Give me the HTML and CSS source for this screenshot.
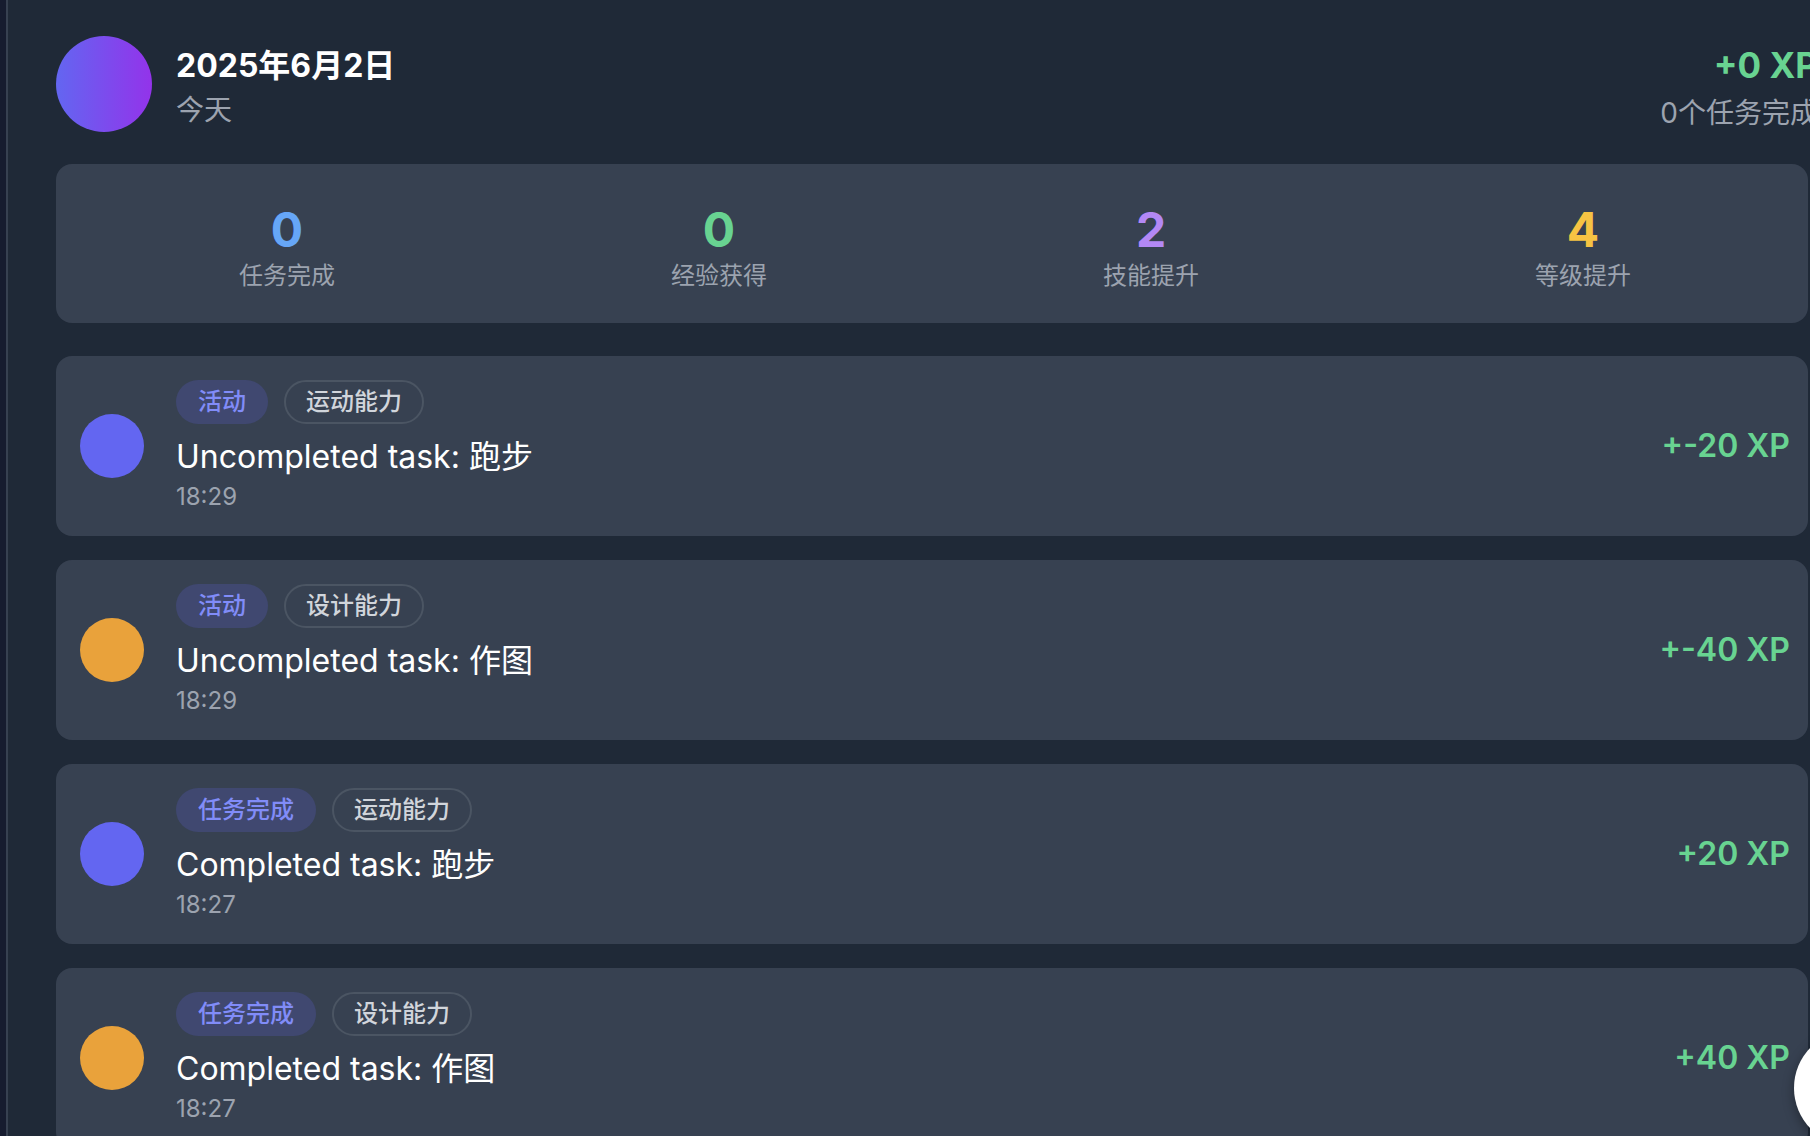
FILE: index.html
```html
<!DOCTYPE html>
<html lang="zh-CN">
<head>
<meta charset="utf-8">
<title>2025年6月2日</title>
<link rel="stylesheet" href="styles.css">
</head>
<body>
<div class="app">
  <div class="rail"></div>
  <main class="main">
    <header class="day-header">
      <div class="day-avatar"></div>
      <div class="day-info">
        <div class="day-title">2025年6月2日</div>
        <div class="day-sub">今天</div>
      </div>
      <div class="day-summary">
        <div class="day-xp">+0 XP</div>
        <div class="day-count">0个任务完成</div>
      </div>
    </header>

    <section class="stats">
      <div class="stat">
        <div class="stat-num blue">0</div>
        <div class="stat-label">任务完成</div>
      </div>
      <div class="stat">
        <div class="stat-num green">0</div>
        <div class="stat-label">经验获得</div>
      </div>
      <div class="stat">
        <div class="stat-num purple">2</div>
        <div class="stat-label">技能提升</div>
      </div>
      <div class="stat">
        <div class="stat-num yellow">4</div>
        <div class="stat-label">等级提升</div>
      </div>
    </section>

    <section class="feed">
      <article class="entry">
        <div class="entry-dot indigo"></div>
        <div class="entry-body">
          <div class="tags">
            <span class="tag tag-type">活动</span>
            <span class="tag tag-skill">运动能力</span>
          </div>
          <div class="entry-title">Uncompleted task: 跑步</div>
          <div class="entry-time">18:29</div>
        </div>
        <div class="entry-xp">+-20 XP</div>
      </article>

      <article class="entry">
        <div class="entry-dot orange"></div>
        <div class="entry-body">
          <div class="tags">
            <span class="tag tag-type">活动</span>
            <span class="tag tag-skill">设计能力</span>
          </div>
          <div class="entry-title">Uncompleted task: 作图</div>
          <div class="entry-time">18:29</div>
        </div>
        <div class="entry-xp">+-40 XP</div>
      </article>

      <article class="entry">
        <div class="entry-dot indigo"></div>
        <div class="entry-body">
          <div class="tags">
            <span class="tag tag-type">任务完成</span>
            <span class="tag tag-skill">运动能力</span>
          </div>
          <div class="entry-title">Completed task: 跑步</div>
          <div class="entry-time">18:27</div>
        </div>
        <div class="entry-xp">+20 XP</div>
      </article>

      <article class="entry">
        <div class="entry-dot orange"></div>
        <div class="entry-body">
          <div class="tags">
            <span class="tag tag-type">任务完成</span>
            <span class="tag tag-skill">设计能力</span>
          </div>
          <div class="entry-title">Completed task: 作图</div>
          <div class="entry-time">18:27</div>
        </div>
        <div class="entry-xp">+40 XP</div>
      </article>
    </section>
  </main>
</div>
<div class="fab"></div>
</body>
</html>
```

FILE: styles.css
```css
html, body {
  margin: 0;
  padding: 0;
  height: 100%;
  overflow: hidden;
  background: #1f2937;
  font-family: Inter, "Noto Sans CJK SC", sans-serif;
  color: #ffffff;
}

.app {
  display: flex;
  min-height: 100%;
}

.rail {
  width: 6px;
  flex: none;
  background: #161c2f;
}

.main {
  flex: 1;
  min-width: 0;
  background: #1f2937;
  border-left: 2px solid #374151;
  padding: 36px 2px 0 48px;
}

/* header */
.day-header {
  display: flex;
  align-items: center;
  gap: 24px;
  height: 96px;
  margin-right: -10px;
  margin-bottom: 32px;
}

.day-avatar {
  width: 96px;
  height: 96px;
  flex: none;
  border-radius: 50%;
  background: linear-gradient(to right, #6366f1, #9333ea);
}

.day-info {
  flex: 1;
  padding-top: 8px;
}

.day-title {
  font-size: 32px;
  line-height: 40px;
  font-weight: 700;
  color: #ffffff;
}

.day-sub {
  margin-top: 4px;
  font-size: 28px;
  line-height: 40px;
  color: #9ca3af;
}

.day-summary {
  text-align: right;
  white-space: nowrap;
  padding-top: 10px;
}

.day-xp {
  font-size: 35px;
  line-height: 40px;
  font-weight: 700;
  color: #68d391;
}

.day-count {
  margin-top: 8px;
  font-size: 28px;
  line-height: 40px;
  color: #9ca3af;
}

/* stats */
.stats {
  display: grid;
  grid-template-columns: repeat(4, 1fr);
  gap: 24px;
  background: #374151;
  border-radius: 16px;
  padding: 42px 21px 31px 27px;
  margin-bottom: 33px;
}

.stat {
  text-align: center;
}

.stat-num {
  font-size: 48px;
  line-height: 48px;
  font-weight: 700;
}

.stat-label {
  margin-top: 6px;
  font-size: 24px;
  line-height: 32px;
  color: #9ca3af;
}

.blue { color: #66a6f7; }
.green { color: #68d391; }
.purple { color: #b388f5; }
.yellow { color: #f6c343; }

/* feed */
.feed {
  display: flex;
  flex-direction: column;
  gap: 24px;
}

.entry {
  display: flex;
  align-items: center;
  gap: 32px;
  background: #374151;
  border-radius: 16px;
  padding: 24px 18px 24px 24px;
}

.entry-dot {
  width: 64px;
  height: 64px;
  flex: none;
  border-radius: 50%;
}

.entry-dot.indigo { background: #6366f1; }
.entry-dot.orange { background: #e9a23b; }

.entry-body {
  flex: 1;
  min-width: 0;
}

.tags {
  display: flex;
  gap: 16px;
}

.tag {
  display: inline-block;
  font-size: 24px;
  line-height: 40px;
  font-weight: 500;
  padding: 0 20px;
  border-radius: 999px;
  border: 2px solid transparent;
}

.tag-type {
  background: rgba(99, 102, 241, 0.2);
  color: #818cf8;
}

.tag-skill {
  border-color: #4b5563;
  color: #d1d5db;
}

.entry-title {
  margin-top: 9px;
  font-size: 32px;
  line-height: 48px;
  font-weight: 400;
  color: #ffffff;
}

.entry-time {
  margin-top: 1px;
  font-size: 24px;
  line-height: 30px;
  color: #9ca3af;
}

.entry-xp {
  flex: none;
  font-size: 32px;
  line-height: 40px;
  font-weight: 600;
  color: #68d391;
}

.fab {
  position: fixed;
  left: 1794px;
  top: 1030px;
  width: 116px;
  height: 116px;
  border-radius: 50%;
  background: #ffffff;
  box-shadow: 0 4px 12px rgba(0, 0, 0, 0.35);
}
```
